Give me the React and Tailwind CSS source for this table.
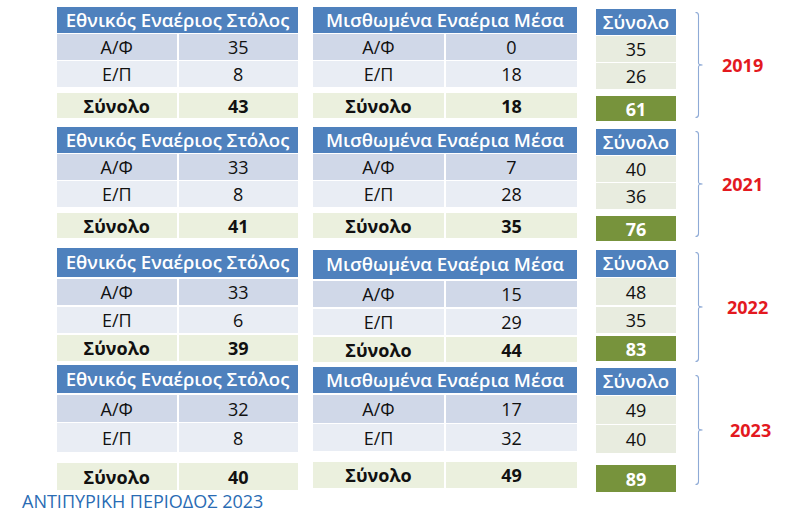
import React from "react";

const blocks = [
  {
    h: "h-[124px]",
    year: "2019",
    yearMl: "ml-[17px]",
    left: { mt: "mt-[7px]", hh: "h-[26px]", g1: "mt-[1px]", r1: "h-[26px]", g2: "mt-[1px]", r2: "h-[26px]", g3: "mt-[6px]", th: "h-[25px]" },
    mid: { mt: "mt-[7px]", hh: "h-[26px]", g1: "mt-[1px]", r1: "h-[26px]", g2: "mt-[1px]", r2: "h-[26px]", g3: "mt-[6px]", th: "h-[25px]" },
    right: { mt: "mt-[9px]", hh: "h-[26px]", g1: "mt-[1px]", r1: "h-[26px]", g2: "mt-[1px]", r2: "h-[26px]", g3: "mt-[7px]", th: "h-[25px]" },
    brace: { h: 106 },
    braceMt: "mt-[12px]",
    l: ["35", "8", "43"],
    m: ["0", "18", "18"],
    r: ["35", "26", "61"],
  },
  {
    h: "h-[121px]",
    year: "2021",
    yearMl: "ml-[17px]",
    left: { mt: "mt-[3px]", hh: "h-[26px]", g1: "mt-[1px]", r1: "h-[26px]", g2: "mt-[1px]", r2: "h-[26px]", g3: "mt-[6px]", th: "h-[25px]" },
    mid: { mt: "mt-[3px]", hh: "h-[26px]", g1: "mt-[1px]", r1: "h-[26px]", g2: "mt-[1px]", r2: "h-[26px]", g3: "mt-[6px]", th: "h-[25px]" },
    right: { mt: "mt-[5px]", hh: "h-[26px]", g1: "mt-[1px]", r1: "h-[26px]", g2: "mt-[1px]", r2: "h-[26px]", g3: "mt-[7px]", th: "h-[25px]" },
    brace: { h: 106 },
    braceMt: "mt-[7px]",
    l: ["33", "8", "41"],
    m: ["7", "28", "35"],
    r: ["40", "36", "76"],
  },
  {
    h: "h-[118px]",
    year: "2022",
    yearMl: "ml-[22px]",
    left: { mt: "mt-[3px]", hh: "h-[29px]", g1: "mt-[2px]", r1: "h-[26px]", g2: "mt-[2px]", r2: "h-[26px]", g3: "mt-[2px]", th: "h-[26px]" },
    mid: { mt: "mt-[5px]", hh: "h-[29px]", g1: "mt-[2px]", r1: "h-[26px]", g2: "mt-[2px]", r2: "h-[26px]", g3: "mt-[2px]", th: "h-[25px]" },
    right: { mt: "mt-[5px]", hh: "h-[27px]", g1: "mt-[1px]", r1: "h-[27px]", g2: "mt-[2px]", r2: "h-[26px]", g3: "mt-[3px]", th: "h-[25px]" },
    brace: { h: 110 },
    braceMt: "mt-[7px]",
    l: ["33", "6", "39"],
    m: ["15", "29", "44"],
    r: ["48", "35", "83"],
  },
  {
    h: "h-[127px]",
    year: "2023",
    yearMl: "ml-[25px]",
    left: { mt: "mt-[2px]", hh: "h-[28px]", g1: "mt-[2px]", r1: "h-[27px]", g2: "mt-[1px]", r2: "h-[29px]", g3: "mt-[11px]", th: "h-[27px]" },
    mid: { mt: "mt-[4px]", hh: "h-[26px]", g1: "mt-[2px]", r1: "h-[28px]", g2: "mt-[1px]", r2: "h-[27px]", g3: "mt-[11px]", th: "h-[26px]" },
    right: { mt: "mt-[5px]", hh: "h-[27px]", g1: "mt-[1px]", r1: "h-[28px]", g2: "mt-[1px]", r2: "h-[28px]", g3: "mt-[12px]", th: "h-[27px]" },
    brace: { h: 110 },
    braceMt: "mt-[12px]",
    l: ["32", "8", "40"],
    m: ["17", "32", "49"],
    r: ["49", "40", "89"],
  },
];

function Table({ s, title, width, vals }) {
  return (
    <div className={`flex flex-col shrink-0 ${s.mt} ${width}`}>
      <div className={`${s.hh} bg-[#4f81bd] text-white text-[18.6px] font-semibold flex items-center justify-center whitespace-nowrap`}>
        {title}
      </div>
      <div className={`${s.g1} ${s.r1} grid grid-cols-2 gap-x-[2px]`}>
        <div className="bg-[#d0d8e8] flex items-center justify-center">Α/Φ</div>
        <div className="bg-[#d0d8e8] flex items-center justify-center">{vals[0]}</div>
      </div>
      <div className={`${s.g2} ${s.r2} grid grid-cols-2 gap-x-[2px]`}>
        <div className="bg-[#e9edf4] flex items-center justify-center">Ε/Π</div>
        <div className="bg-[#e9edf4] flex items-center justify-center">{vals[1]}</div>
      </div>
      <div className={`${s.g3} ${s.th} grid grid-cols-2 gap-x-[2px] font-bold`}>
        <div className="bg-[#ebf0de] flex items-center justify-center">Σύνολο</div>
        <div className="bg-[#ebf0de] flex items-center justify-center">{vals[2]}</div>
      </div>
    </div>
  );
}

function SumCol({ s, vals }) {
  return (
    <div className={`flex flex-col shrink-0 w-[80px] ${s.mt}`}>
      <div className={`${s.hh} bg-[#4f81bd] text-white text-[18.6px] font-semibold flex items-center justify-center`}>Σύνολο</div>
      <div className={`${s.g1} ${s.r1} bg-[#e8ecdf] flex items-center justify-center`}>{vals[0]}</div>
      <div className={`${s.g2} ${s.r2} bg-[#e8ecdf] flex items-center justify-center`}>{vals[1]}</div>
      <div className={`${s.g3} ${s.th} bg-[#77933c] text-white font-bold flex items-center justify-center`}>{vals[2]}</div>
    </div>
  );
}

function Brace({ h }) {
  const m = h / 2;
  const d = `M0.5,0.5 Q3.5,0.5 3.5,3.5 V${m - 2} Q3.5,${m} 7.5,${m} Q3.5,${m} 3.5,${m + 2} V${h - 3.5} Q3.5,${h - 0.5} 0.5,${h - 0.5}`;
  return (
    <svg width="10" height={h} viewBox={`0 0 10 ${h}`} className="block">
      <path d={d} fill="none" stroke="#8eaad6" strokeWidth="1.1" />
    </svg>
  );
}

export default function App() {
  return (
    <div className="w-[800px] h-[512px] bg-white overflow-hidden font-['Open_Sans',sans-serif] text-[18px] text-[#111] leading-none">
      <div className="flex flex-col">
        {blocks.map((b) => (
          <div key={b.year} className={`flex items-start shrink-0 ${b.h}`}>
            <div className="ml-[57px] flex">
              <Table s={b.left} title="Εθνικός Εναέριος Στόλος" width="w-[241px]" vals={b.l} />
            </div>
            <div className="ml-[15px] flex">
              <Table s={b.mid} title="Μισθωμένα Εναέρια Μέσα" width="w-[264px]" vals={b.m} />
            </div>
            <div className="ml-[19px] flex">
              <SumCol s={b.right} vals={b.r} />
            </div>
            <div className={`ml-[19px] flex items-center ${b.braceMt}`}>
              <Brace h={b.brace.h} />
              <span className={`${b.yearMl} text-[#e3191f] font-bold`}>{b.year}</span>
            </div>
          </div>
        ))}
        <div className="pl-[22px] text-[18px] leading-[22px] text-[#2a6cb4] whitespace-nowrap">
          ΑΝΤΙΠΥΡΙΚΗ ΠΕΡΙΟΔΟΣ 2023
        </div>
      </div>
    </div>
  );
}
